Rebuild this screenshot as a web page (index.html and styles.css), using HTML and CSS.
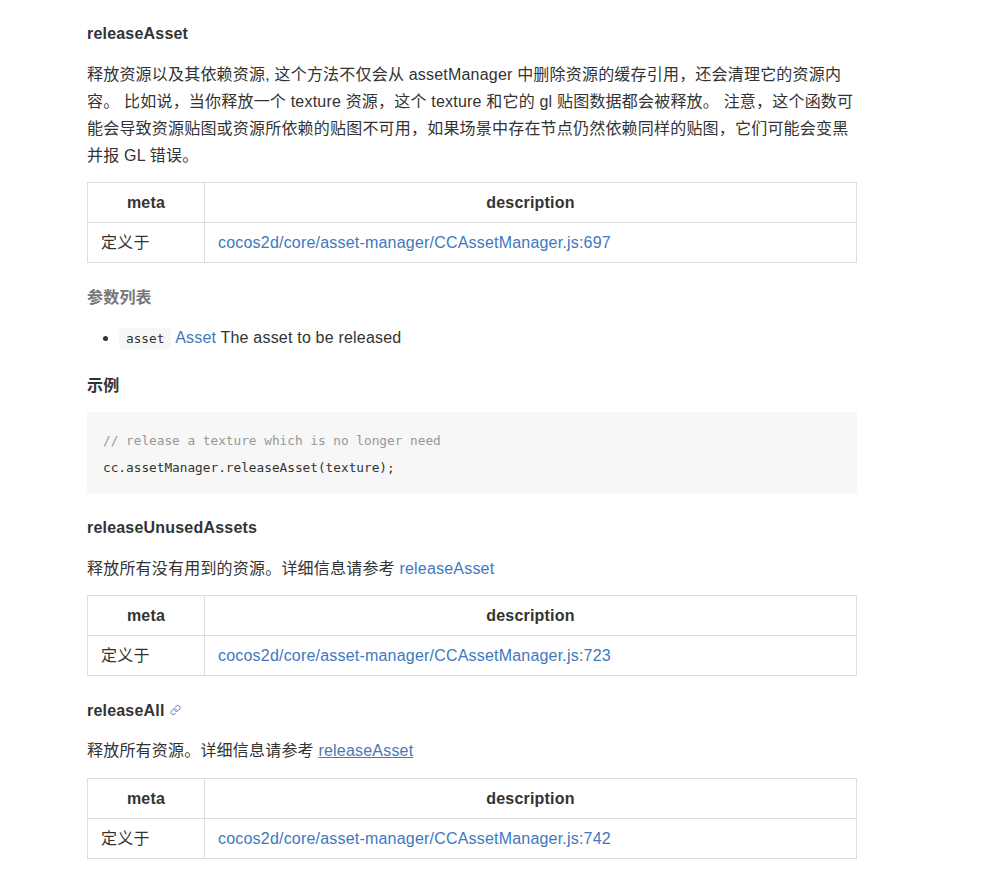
FILE: index.html
```html
<!DOCTYPE html>
<html lang="zh-CN">
<head>
<meta charset="utf-8">
<title>releaseAsset</title>
<link rel="stylesheet" href="styles.css">
</head>
<body>
<main class="content">
  <h4 class="method first">releaseAsset</h4>
  <p>释放资源以及其依赖资源, 这个方法不仅会从 assetManager 中删除资源的缓存引用，还会清理它的资源内容。 比如说，当你释放一个 texture 资源，这个 texture 和它的 gl 贴图数据都会被释放。 注意，这个函数可能会导致资源贴图或资源所依赖的贴图不可用，如果场景中存在节点仍然依赖同样的贴图，它们可能会变黑并报 GL 错误。</p>
  <table>
    <thead><tr><th class="col-meta">meta</th><th>description</th></tr></thead>
    <tbody><tr><td>定义于</td><td><a href="#">cocos2d/core/asset-manager/CCAssetManager.js:697</a></td></tr></tbody>
  </table>
  <h5 class="params">参数列表</h5>
  <ul>
    <li><code>asset</code> <a href="#">Asset</a> The asset to be released</li>
  </ul>
  <h5 class="example">示例</h5>
  <pre><span class="comment">// release a texture which is no longer need</span>
cc.assetManager.releaseAsset(texture);</pre>
  <h4 class="method">releaseUnusedAssets</h4>
  <p>释放所有没有用到的资源。详细信息请参考 <a href="#">releaseAsset</a></p>
  <table>
    <thead><tr><th class="col-meta">meta</th><th>description</th></tr></thead>
    <tbody><tr><td>定义于</td><td><a href="#">cocos2d/core/asset-manager/CCAssetManager.js:723</a></td></tr></tbody>
  </table>
  <h4 class="method method-anchored">releaseAll <a href="#" class="anchor"><svg viewBox="0 0 24 24" width="11" height="12" aria-hidden="true"><path d="M10 13a5 5 0 0 0 7.54.54l3-3a5 5 0 0 0-7.07-7.07l-1.72 1.71"/><path d="M14 11a5 5 0 0 0-7.54-.54l-3 3a5 5 0 0 0 7.07 7.07l1.71-1.71"/></svg></a></h4>
  <p class="after-anchored">释放所有资源。详细信息请参考 <a href="#" class="active">releaseAsset</a></p>
  <table>
    <thead><tr><th class="col-meta">meta</th><th>description</th></tr></thead>
    <tbody><tr><td>定义于</td><td><a href="#">cocos2d/core/asset-manager/CCAssetManager.js:742</a></td></tr></tbody>
  </table>
</main>
</body>
</html>
```
FILE: styles.css
```css
html, body { margin: 0; padding: 0; background: #fff; }
body {
  font-family: "Liberation Sans", "Noto Sans CJK SC", sans-serif;
  font-size: 16px;
  line-height: 27px;
  letter-spacing: 0.2px;
  color: #333;
}
.content { width: 770px; margin-left: 87px; padding-top: 20px; }
a { color: #4078c0; text-decoration: none; }
a.active { color: #4a76b4; text-decoration: underline; }
h4, h5 { margin: 0; font-size: 16px; font-weight: 700; line-height: 28px; }
h4.method { margin-top: 20px; }
h4.first { margin-top: 0; }
h4.method-anchored { margin-top: 21px; }
p { margin: 13px 0 13px; }
p.after-anchored { margin: 12px 0 14px; }
table { width: 770px; border-collapse: collapse; table-layout: fixed; }
th, td { border: 1px solid #ddd; padding: 6px 13px; height: 27px; }
th { text-align: center; }
.col-meta { width: 90px; }
.params { color: #777; margin-top: 21px; }
.example { margin-top: 20px; }
ul { margin: 12px 0 0; padding: 0 0 0 32px; }
code {
  font-family: "DejaVu Sans Mono", monospace;
  font-size: 12.75px;
  letter-spacing: 0;
  background: #f7f7f7;
  padding: 3px 7px;
  border-radius: 3px;
}
pre {
  margin: 12px 0 0;
  padding: 15px 16px 13px;
  background: #f7f7f7;
  font-family: "DejaVu Sans Mono", monospace;
  font-size: 12.75px;
  letter-spacing: 0;
  line-height: 27px;
}
.comment { color: #969896; }
.anchor { display: inline-block; vertical-align: 0; line-height: 0; margin-left: 1px; }
.anchor svg { fill: none; stroke: #4078c0; stroke-width: 2; stroke-linecap: round; stroke-linejoin: round; }
```
